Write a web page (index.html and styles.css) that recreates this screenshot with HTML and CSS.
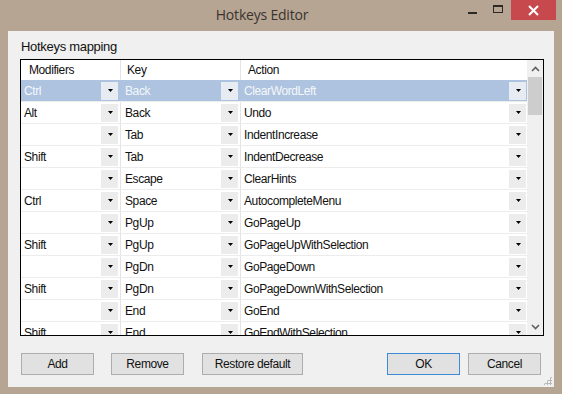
FILE: index.html
```html
<!DOCTYPE html>
<html lang="en">
<head>
  <meta charset="UTF-8">
  <title>Hotkeys Editor</title>
  <link rel="stylesheet" href="styles.css">
</head>
<body>
  <div class="window">
    <div class="titlebar">
      <span class="title">Hotkeys Editor</span>
      <div class="caption-buttons">
        <span class="cap-btn cap-min"><span class="min-bar"></span></span>
        <span class="cap-btn cap-max"><span class="max-box"></span></span>
        <span class="cap-btn cap-close">
          <svg width="11" height="11" viewBox="0 0 11 11"><path d="M1 1 L10 10 M10 1 L1 10" stroke="#fff" stroke-width="2"/></svg>
        </span>
      </div>
    </div>
    <div class="client">
      <div class="group-label">Hotkeys mapping</div>
      <div class="grid">
        <div class="grid-main">
          <div class="grid-head">
            <div class="hcell c1">Modifiers</div>
            <div class="hcell c2">Key</div>
            <div class="hcell c3">Action</div>
          </div>
          <div class="grid-body" id="grid-body"></div>
        </div>
        <div class="scrollbar">
          <div class="sb-arrow">
            <svg width="9" height="6" viewBox="0 0 9 6"><path d="M1 5 L4.5 1.5 L8 5" stroke="#606060" stroke-width="1.6" fill="none"/></svg>
          </div>
          <div class="sb-track"><div class="sb-thumb"></div></div>
          <div class="sb-arrow">
            <svg width="9" height="6" viewBox="0 0 9 6"><path d="M1 1 L4.5 4.5 L8 1" stroke="#606060" stroke-width="1.6" fill="none"/></svg>
          </div>
        </div>
      </div>
      <div class="buttons">
        <button class="btn btn-add">Add</button>
        <button class="btn btn-remove">Remove</button>
        <button class="btn btn-restore">Restore default</button>
        <span class="spacer"></span>
        <button class="btn btn-ok">OK</button>
        <button class="btn btn-cancel">Cancel</button>
      </div>
      <div class="grip"></div>
    </div>
  </div>
  <script>
    const rows = [
      ['Ctrl', 'Back', 'ClearWordLeft'],
      ['Alt', 'Back', 'Undo'],
      ['', 'Tab', 'IndentIncrease'],
      ['Shift', 'Tab', 'IndentDecrease'],
      ['', 'Escape', 'ClearHints'],
      ['Ctrl', 'Space', 'AutocompleteMenu'],
      ['', 'PgUp', 'GoPageUp'],
      ['Shift', 'PgUp', 'GoPageUpWithSelection'],
      ['', 'PgDn', 'GoPageDown'],
      ['Shift', 'PgDn', 'GoPageDownWithSelection'],
      ['', 'End', 'GoEnd'],
      ['Shift', 'End', 'GoEndWithSelection']
    ];
    const arrow = '<span class="drop"><svg width="5" height="3" viewBox="0 0 5 3"><path d="M0 0 H5 L2.5 3 Z" fill="#000"/></svg></span>';
    const body = document.getElementById('grid-body');
    rows.forEach((r, i) => {
      const row = document.createElement('div');
      row.className = i === 0 ? 'row selected' : 'row';
      row.innerHTML =
        `<div class="cell c1"><span class="val">${r[0]}</span>${arrow}</div>` +
        `<div class="cell c2"><span class="val">${r[1]}</span>${arrow}</div>` +
        `<div class="cell c3"><span class="val">${r[2]}</span>${arrow}</div>`;
      body.appendChild(row);
    });
  </script>
</body>
</html>
```
FILE: styles.css
```css
* {
  margin: 0;
  padding: 0;
  box-sizing: border-box;
}
body {
  width: 562px;
  height: 394px;
  background: #b7a593;
  font-family: 'Liberation Sans', Arial, sans-serif;
  font-size: 12px;
  letter-spacing: -0.4px;
  color: #000;
  overflow: hidden;
}
.window {
  display: flex;
  flex-direction: column;
  height: 394px;
}
.titlebar {
  position: relative;
  height: 31px;
  flex-shrink: 0;
  display: flex;
  justify-content: center;
  align-items: flex-start;
  padding-right: 38px;
}
.title {
  font-family: 'Open Sans', sans-serif;
  font-size: 14px;
  letter-spacing: -0.2px;
  color: #3a3430;
  padding-top: 5px;
}
.caption-buttons {
  position: absolute;
  top: 0;
  right: 6px;
  display: flex;
}
.cap-btn {
  display: flex;
  align-items: center;
  justify-content: center;
  height: 20px;
}
.cap-min {
  width: 26px;
  align-items: flex-end;
  padding-bottom: 6px;
}
.min-bar {
  width: 9px;
  height: 2px;
  background: #2e2824;
}
.cap-max {
  width: 26px;
}
.max-box {
  width: 10px;
  height: 8px;
  border: 1px solid #2e2824;
  border-top-width: 2px;
  margin-bottom: 3px;
}
.cap-close {
  width: 45px;
  background: #c7494d;
}
.client {
  position: relative;
  flex: 1;
  margin: 0 8px 7px 8px;
  background: #f0f0f0;
  display: flex;
  flex-direction: column;
}
.group-label {
  font-size: 13px;
  letter-spacing: -0.3px;
  padding: 8px 0 0 13px;
  height: 28px;
  color: #111;
}
.grid {
  display: flex;
  margin-left: 12px;
  width: 524px;
  height: 277px;
  border: 1px solid #000;
  background: #fff;
}
.grid-main {
  flex: 1;
  display: flex;
  flex-direction: column;
  overflow: hidden;
}
.grid-head {
  display: flex;
  height: 20px;
  flex-shrink: 0;
}
.hcell {
  line-height: 20px;
  border-right: 1px solid #e4e4e4;
  color: #111;
}
.hcell.c1 { padding-left: 8px; }
.hcell.c2 { padding-left: 6px; }
.hcell.c3 { padding-left: 7px; border-right: none; }
.c1 { width: 100px; }
.c2 { width: 120px; }
.c3 { flex: 1; }
.grid-body {
  flex: 1;
  overflow: hidden;
}
.row {
  display: flex;
  height: 22px;
  border-bottom: 1px solid #ececec;
}
.cell {
  display: flex;
  align-items: center;
  justify-content: space-between;
  border-right: 1px solid #e4e4e4;
  padding-left: 3px;
  padding-right: 2px;
}
.cell.c2 { padding-left: 4px; }
.cell.c3 { border-right: none; padding-right: 1px; }
.val {
  white-space: nowrap;
  color: #111;
}
.drop {
  width: 17px;
  height: 18px;
  background: #ececec;
  display: flex;
  align-items: center;
  justify-content: center;
  padding-left: 2px;
}
.drop svg { display: block; }
.row.selected {
  background: #aec3df;
}
.row.selected .cell {
  border-right-color: #aec3df;
}
.row.selected .val {
  color: #f4f7fb;
}
.row.selected .drop {
  background: #e7ecf3;
}
.scrollbar {
  width: 16px;
  display: flex;
  flex-direction: column;
  background: #f0f0f0;
}
.sb-arrow {
  height: 17px;
  display: flex;
  align-items: center;
  justify-content: center;
}
.sb-track {
  flex: 1;
  padding: 0 1px;
}
.sb-thumb {
  height: 38px;
  background: #cdcdcd;
}
.buttons {
  display: flex;
  align-items: center;
  padding: 17px 13px 0 13px;
}
.btn {
  font-family: 'Liberation Sans', Arial, sans-serif;
  font-size: 12px;
  letter-spacing: -0.4px;
  color: #111;
  height: 22px;
  width: 73px;
  background: #e1e1e1;
  border: 1px solid #adadad;
}
.btn-remove { margin-left: 17px; }
.btn-restore { margin-left: 18px; width: 101px; }
.spacer { flex: 1; }
.btn-ok { border-color: #3c8ad8; }
.btn-cancel { margin-left: 8px; }
.grip {
  position: absolute;
  right: 2px;
  bottom: 2px;
  width: 9px;
  height: 9px;
  background:
    radial-gradient(circle, #b8b8b8 1px, transparent 1.2px) 0 0 / 3px 3px;
  clip-path: polygon(100% 0, 100% 100%, 0 100%);
}
```
